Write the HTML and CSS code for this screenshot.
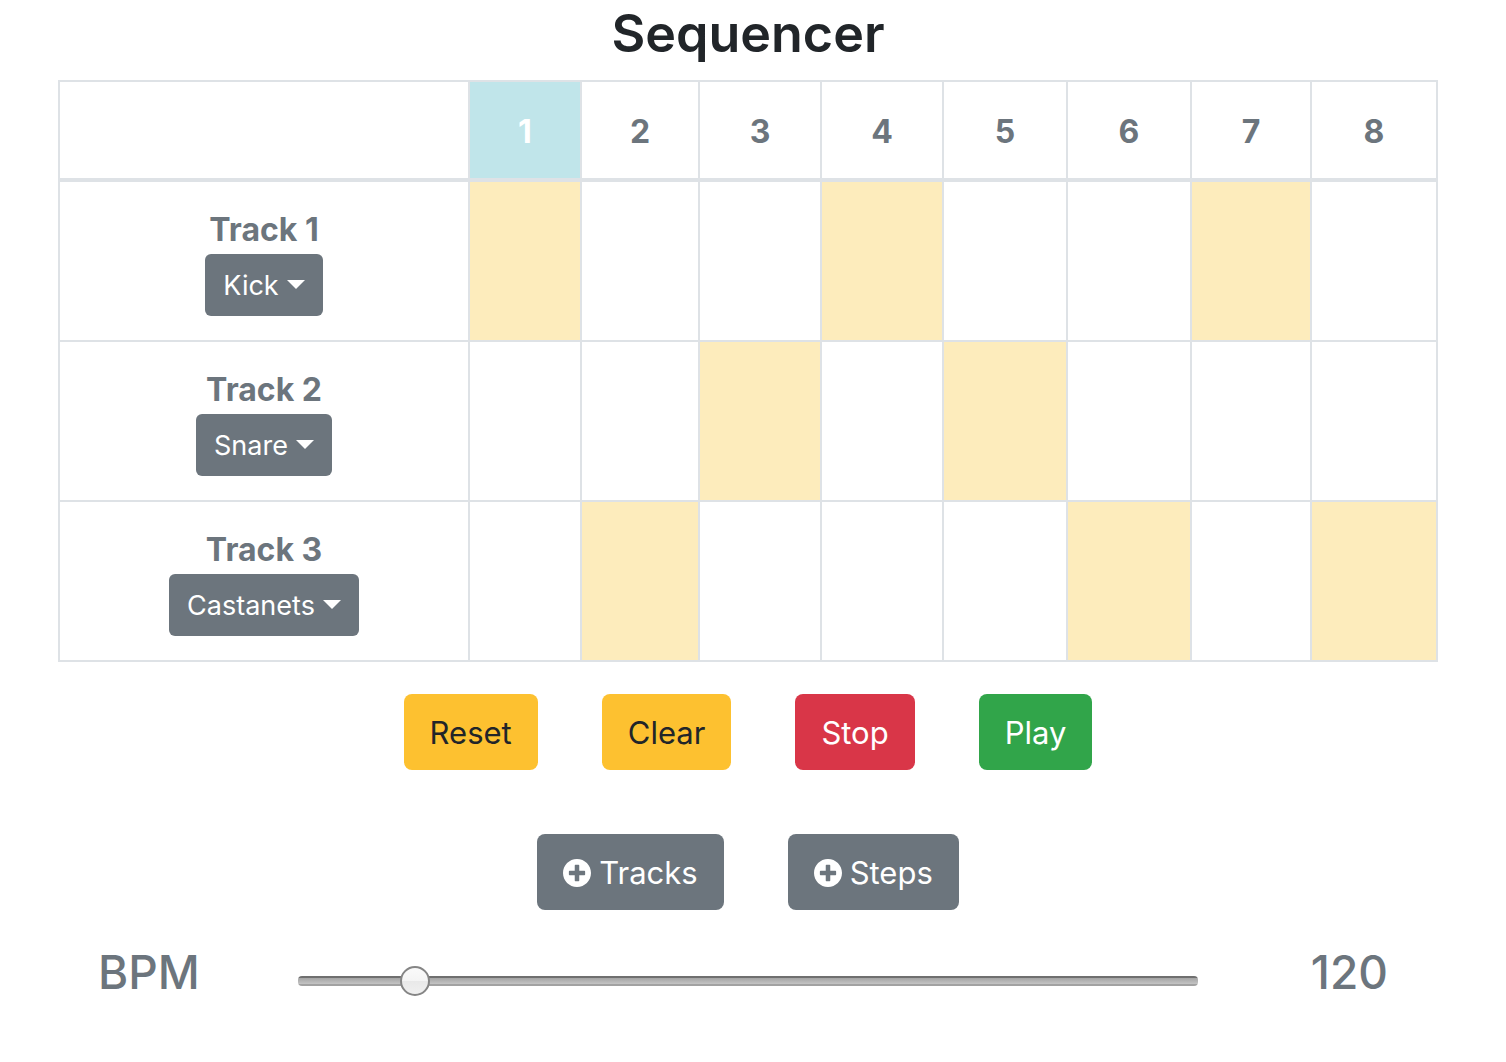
FILE: index.html
```
<!DOCTYPE html>
<html lang="en">
<head>
<meta charset="utf-8">
<title>Sequencer</title>
<link rel="stylesheet" href="styles.css">
</head>
<body>
<main class="container">
  <h1>Sequencer</h1>
  <table class="grid">
    <colgroup>
      <col class="col-track"><col class="col-1"><col class="col-2"><col class="col-3"><col class="col-4"><col class="col-5"><col class="col-6"><col class="col-7"><col class="col-8">
    </colgroup>
    <thead>
      <tr><td></td><th class="current" scope="col">1</th><th scope="col">2</th><th scope="col">3</th><th scope="col">4</th><th scope="col">5</th><th scope="col">6</th><th scope="col">7</th><th scope="col">8</th></tr>
    </thead>
    <tbody>
      <tr><th scope="row"><span class="track-name">Track 1</span><button type="button" class="btn dropdown">Kick</button></th><td class="on"></td><td></td><td></td><td class="on"></td><td></td><td></td><td class="on"></td><td></td></tr>
      <tr><th scope="row"><span class="track-name">Track 2</span><button type="button" class="btn dropdown">Snare</button></th><td></td><td></td><td class="on"></td><td></td><td class="on"></td><td></td><td></td><td></td></tr>
      <tr><th scope="row"><span class="track-name">Track 3</span><button type="button" class="btn dropdown">Castanets</button></th><td></td><td class="on"></td><td></td><td></td><td></td><td class="on"></td><td></td><td class="on"></td></tr>
    </tbody>
  </table>
  <div class="actions">
    <button type="button" class="btn warning">Reset</button>
    <button type="button" class="btn warning">Clear</button>
    <button type="button" class="btn danger">Stop</button>
    <button type="button" class="btn success">Play</button>
  </div>
  <div class="actions add">
    <button type="button" class="btn"><svg class="icon" viewBox="8 8 496 496" aria-hidden="true"><path fill="currentColor" d="M256 8C119 8 8 119 8 256s111 248 248 248 248-111 248-248S393 8 256 8zm144 276c0 6.600-5.400 12-12 12h-92v92c0 6.600-5.400 12-12 12h-56c-6.600 0-12-5.400-12-12v-92h-92c-6.600 0-12-5.400-12-12v-56c0-6.600 5.400-12 12-12h92v-92c0-6.600 5.400-12 12-12h56c6.600 0 12 5.400 12 12v92h92c6.600 0 12 5.400 12 12v56z"/></svg>Tracks</button>
    <button type="button" class="btn"><svg class="icon" viewBox="8 8 496 496" aria-hidden="true"><path fill="currentColor" d="M256 8C119 8 8 119 8 256s111 248 248 248 248-111 248-248S393 8 256 8zm144 276c0 6.600-5.400 12-12 12h-92v92c0 6.600-5.400 12-12 12h-56c-6.600 0-12-5.400-12-12v-92h-92c-6.600 0-12-5.400-12-12v-56c0-6.600 5.400-12 12-12h92v-92c0-6.600 5.400-12 12-12h56c6.600 0 12 5.400 12 12v92h92c6.600 0 12 5.400 12 12v56z"/></svg>Steps</button>
  </div>
  <div class="tempo">
    <label for="bpm">BPM</label>
    <input id="bpm" type="range" min="50" max="650" value="120">
    <output for="bpm">120</output>
  </div>
</main>
</body>
</html>
```

FILE: styles.css
```
* {
  box-sizing: border-box;
}

body {
  margin: 0;
  background: #fff;
  color: #212529;
  font-family: Inter, sans-serif;
  font-size: 32px;
  line-height: 48px;
}

.container {
  margin-left: 58px;
  margin-right: 68px;
}

h1 {
  margin: 0;
  padding-bottom: 12px;
  font-size: 52px;
  font-weight: 600;
  line-height: 68px;
  text-align: center;
}

.grid {
  width: 100%;
  border-collapse: collapse;
  table-layout: fixed;
  color: #6c757d;
}

.col-track { width: 410px; }
.col-1 { width: 112px; }
.col-2 { width: 118px; }
.col-3, .col-4 { width: 122px; }
.col-5, .col-6 { width: 124px; }
.col-7 { width: 120px; }
.col-8 { width: 126px; }

.grid th,
.grid td {
  height: 160px;
  padding: 0;
  border: 2px solid #dee2e6;
  font-weight: 700;
  text-align: center;
}

.grid tbody tr:first-child > * {
  height: 161px;
}

.grid thead th,
.grid thead td {
  height: 99px;
  padding-top: 3px;
  border-bottom-width: 4px;
}

.grid .current {
  background: #c0e5ea;
  color: #fff;
}

.grid .on {
  background: #fdecbc;
}

.track-name {
  display: block;
}

.btn {
  display: inline-flex;
  align-items: center;
  height: 76px;
  padding: 2px 26px 0;
  border: 0;
  border-radius: 8px;
  background: #6c757d;
  color: #fff;
  font-family: inherit;
  font-size: 31px;
  line-height: 48px;
}

.dropdown {
  height: 62px;
  padding: 2px 18px 0;
  border-radius: 6px;
  font-size: 27px;
  line-height: 42px;
}

.dropdown::after {
  content: "";
  margin: 0 0 4px 8px;
  border-top: 9px solid;
  border-right: 9px solid transparent;
  border-left: 9px solid transparent;
}

.warning { background: #fdc130; color: #212529; }
.danger { background: #d93648; }
.success { background: #31a54a; }

.actions {
  display: flex;
  justify-content: center;
  gap: 64px;
  padding-top: 32px;
}

.add {
  padding-top: 64px;
}

.icon {
  width: 28px;
  height: 28px;
  margin-right: 8px;
}

.tempo {
  display: flex;
  align-items: center;
  padding: 32px 50px 0 40px;
  color: #6c757d;
  font-size: 46px;
  font-weight: 500;
  line-height: 60px;
}

.tempo label,
.tempo output {
  flex: 0 0 200px;
}

.tempo output {
  flex-basis: 190px;
  text-align: right;
}

.tempo input {
  flex: 1;
  min-width: 0;
  height: 30px;
  margin: 18px 0 0;
  appearance: none;
  background: none;
}

.tempo input::-webkit-slider-runnable-track {
  height: 10px;
  border-radius: 4px;
  background: linear-gradient(#6f6f6f 0 2px, #a4a4a4 2px, #c4c4c4 8px, #a2a2a2 8px);
}

.tempo input::-webkit-slider-thumb {
  appearance: none;
  width: 30px;
  height: 30px;
  margin-top: -10px;
  border: 2px solid #858585;
  border-radius: 50%;
  background: linear-gradient(#fafafa, #f4f4f4 50%, #e9e9e9 50%, #f0f0f0);
}
```
